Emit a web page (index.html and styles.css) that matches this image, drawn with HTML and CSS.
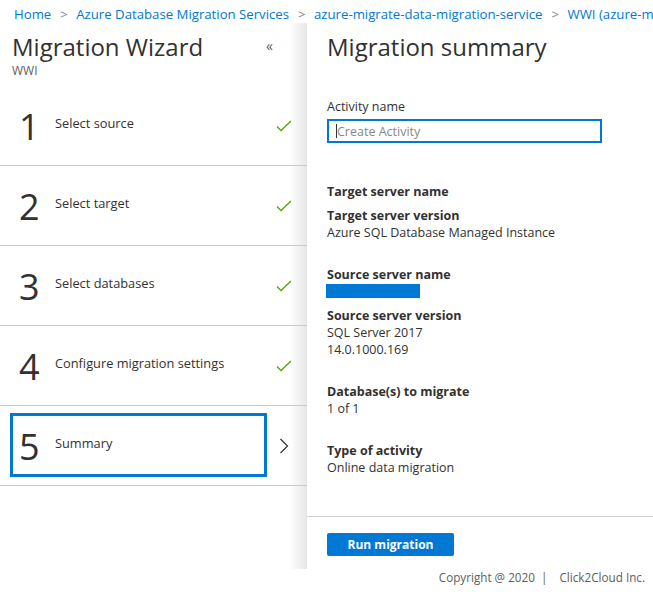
FILE: index.html
```html
<!DOCTYPE html>
<html lang="en">
<head>
<meta charset="utf-8">
<title>Migration Wizard</title>
<link rel="stylesheet" href="styles.css">
</head>
<body>
<nav class="breadcrumb">
  <a class="crumb" href="#">Home</a><span class="sep">&gt;</span>
  <a class="crumb" href="#">Azure Database Migration Services</a><span class="sep">&gt;</span>
  <a class="crumb" href="#">azure-migrate-data-migration-service</a><span class="sep">&gt;</span>
  <a class="crumb" href="#">WWI (azure-m</a>
</nav>

<main class="main">
  <aside class="wizard">
    <header class="wizard-head">
      <div class="wizard-title-row">
        <h1 class="wizard-title">Migration Wizard</h1>
        <span class="collapse">&laquo;</span>
      </div>
      <div class="wizard-sub">WWI</div>
    </header>
    <ol class="steps">
      <li class="step">
        <div class="step-box"><span class="step-num">1</span><span class="step-label">Select source</span></div>
        <span class="step-icon"><svg width="16" height="12" viewBox="0 0 16 12"><path d="M1 6.5 L5 10.5 L15 1" fill="none" stroke="#57a300" stroke-width="1.3"/></svg></span>
      </li>
      <li class="step">
        <div class="step-box"><span class="step-num">2</span><span class="step-label">Select target</span></div>
        <span class="step-icon"><svg width="16" height="12" viewBox="0 0 16 12"><path d="M1 6.5 L5 10.5 L15 1" fill="none" stroke="#57a300" stroke-width="1.3"/></svg></span>
      </li>
      <li class="step">
        <div class="step-box"><span class="step-num">3</span><span class="step-label">Select databases</span></div>
        <span class="step-icon"><svg width="16" height="12" viewBox="0 0 16 12"><path d="M1 6.5 L5 10.5 L15 1" fill="none" stroke="#57a300" stroke-width="1.3"/></svg></span>
      </li>
      <li class="step">
        <div class="step-box"><span class="step-num">4</span><span class="step-label">Configure migration settings</span></div>
        <span class="step-icon"><svg width="16" height="12" viewBox="0 0 16 12"><path d="M1 6.5 L5 10.5 L15 1" fill="none" stroke="#57a300" stroke-width="1.3"/></svg></span>
      </li>
      <li class="step step-active">
        <div class="step-box"><span class="step-num">5</span><span class="step-label">Summary</span></div>
        <span class="step-icon"><svg width="10" height="16" viewBox="0 0 10 16"><path d="M1.5 1 L8.5 8 L1.5 15" fill="none" stroke="#323130" stroke-width="1.2"/></svg></span>
      </li>
    </ol>
  </aside>

  <section class="summary">
    <div class="summary-body">
      <h2 class="summary-title">Migration summary</h2>
      <label class="field-label" for="activity">Activity name</label>
      <div class="input-box"><span class="caret"></span><span class="placeholder">Create Activity</span></div>

      <div class="item item-first">
        <div class="item-label">Target server name</div>
      </div>
      <div class="item item-tight">
        <div class="item-label">Target server version</div>
        <div class="item-value">Azure SQL Database Managed Instance</div>
      </div>
      <div class="item">
        <div class="item-label">Source server name</div>
        <div class="redacted"></div>
      </div>
      <div class="item item-src">
        <div class="item-label">Source server version</div>
        <div class="item-value">SQL Server 2017</div>
        <div class="item-value">14.0.1000.169</div>
      </div>
      <div class="item">
        <div class="item-label">Database(s) to migrate</div>
        <div class="item-value">1 of 1</div>
      </div>
      <div class="item">
        <div class="item-label">Type of activity</div>
        <div class="item-value">Online data migration</div>
      </div>
    </div>
    <footer class="summary-foot">
      <button class="btn-primary" type="button">Run migration</button>
    </footer>
  </section>
</main>

<div class="copyright">Copyright @ 2020&nbsp; |&nbsp;&nbsp;&nbsp; Click2Cloud Inc.</div>
</body>
</html>
```

FILE: styles.css
```css
* { box-sizing: border-box; }

html, body {
  margin: 0;
  padding: 0;
  background: #fff;
}

body {
  width: 653px;
  height: 592px;
  overflow: hidden;
  font-family: "Open Sans", "Noto Sans", sans-serif;
  font-size: 12px;
  color: #323130;
}

.breadcrumb {
  height: 23px;
  padding: 6px 0 0 14px;
  white-space: nowrap;
  overflow: hidden;
  font-size: 13.2px;
  line-height: 17px;
}

.crumb {
  color: #0078d4;
  text-decoration: none;
}

.sep {
  color: #8a8886;
  margin: 0 5px 0 9px;
}

.main {
  display: flex;
  height: 546px;
}

.wizard {
  width: 307px;
  flex: none;
  background: linear-gradient(to right, #fff 0, #fff calc(100% - 17px), #e6e6e6 100%);
}

.wizard-head {
  padding: 8px 0 0 12px;
  height: 63px;
}

.wizard-title-row {
  display: flex;
  align-items: center;
  width: 261px;
  justify-content: space-between;
}

.wizard-title {
  margin: 0;
  font-size: 24px;
  font-weight: 400;
  line-height: 32px;
  color: #323130;
}

.collapse {
  color: #605e5c;
  font-size: 14px;
  line-height: 14px;
  margin-top: -2px;
}

.wizard-sub {
  font-size: 12px;
  line-height: 14px;
  color: #605e5c;
  margin-top: 1px;
}

.steps {
  list-style: none;
  margin: 0;
  padding: 0;
}

.step {
  height: 80px;
  border-bottom: 1px solid #c8c8c8;
  display: flex;
  align-items: center;
  padding-left: 10px;
}

.step-box {
  width: 257px;
  height: 64px;
  margin-top: -1px;
  border: 3px solid transparent;
  display: flex;
  align-items: flex-start;
  padding-left: 6px;
}

.step-active .step-box {
  border-color: #0078d4;
}

.step-num {
  width: 36px;
  font-size: 36px;
  line-height: 58px;
  font-weight: 400;
  color: #323130;
  margin-top: 2px;
}

.step-label {
  font-size: 12.8px;
  line-height: 17px;
  margin-top: 19px;
  color: #323130;
}

.step-icon {
  width: 34px;
  display: flex;
  justify-content: center;
  align-items: center;
  margin-top: 1px;
}

.summary {
  flex: 1;
  display: flex;
  flex-direction: column;
  background: #fff;
}

.summary-body {
  flex: 1;
  padding: 8px 20px 0 20px;
}

.summary-title {
  margin: 0;
  font-size: 24px;
  font-weight: 400;
  line-height: 32px;
}

.field-label {
  display: block;
  margin-top: 35px;
  font-size: 12.5px;
  line-height: 17px;
}

.input-box {
  margin-top: 4px;
  width: 275px;
  height: 24px;
  border: 2px solid #0078d4;
  display: flex;
  align-items: center;
  padding-left: 7px;
}

.caret {
  width: 1px;
  height: 14px;
  background: #323130;
}

.placeholder {
  color: #8a8886;
  font-size: 12.5px;
  line-height: 17px;
}

.item {
  margin-top: 25px;
  font-size: 12.5px;
  line-height: 17px;
}

.item-first { margin-top: 40px; }
.item-tight { margin-top: 7px; }
.item-src { margin-top: 9px; }

.item-label {
  font-weight: 700;
}

.redacted {
  margin-top: 1px;
  width: 94px;
  height: 14px;
  background: #0078d4;
  margin-left: -1px;
}

.summary-foot {
  height: 53px;
  border-top: 1px solid #d2d0ce;
  padding: 16px 0 0 20px;
}

.btn-primary {
  width: 127px;
  height: 23px;
  border: none;
  border-radius: 2px;
  background: #0078d4;
  color: #fff;
  font-family: inherit;
  font-weight: 700;
  font-size: 12px;
  padding: 0;
}

.copyright {
  text-align: right;
  padding-right: 8px;
  font-size: 11.7px;
  line-height: 16px;
  color: #605e5c;
  margin-top: 0;
}
```
